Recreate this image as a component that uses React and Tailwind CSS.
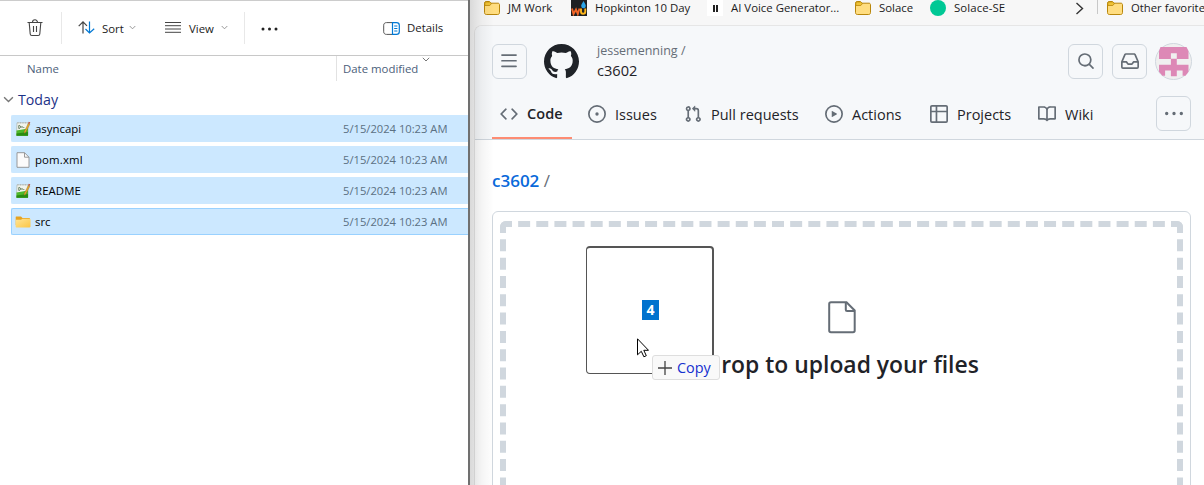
import React from "react";

const PATHS = {
  code: "m11.28 3.22 4.25 4.25a.75.75 0 0 1 0 1.06l-4.25 4.25a.749.749 0 0 1-1.275-.326.749.749 0 0 1 .215-.734L13.94 8l-3.72-3.72a.749.749 0 0 1 .326-1.275.749.749 0 0 1 .734.215Zm-6.56 0a.751.751 0 0 1 1.042.018.751.751 0 0 1 .018 1.042L2.06 8l3.72 3.72a.749.749 0 0 1-.326 1.275.749.749 0 0 1-.734-.215L.47 8.53a.75.75 0 0 1 0-1.06Z",
  issue: "M8 9.5a1.5 1.5 0 1 0 0-3 1.5 1.5 0 0 0 0 3ZM8 0a8 8 0 1 1 0 16A8 8 0 0 1 8 0ZM1.5 8a6.5 6.5 0 1 0 13 0 6.5 6.5 0 0 0-13 0Z",
  pull: "M1.5 3.25a2.25 2.25 0 1 1 3 2.122v5.256a2.251 2.251 0 1 1-1.5 0V5.372A2.25 2.25 0 0 1 1.5 3.25Zm5.677-.177L9.573.677A.25.25 0 0 1 10 .854V2.5h1A2.5 2.5 0 0 1 13.5 5v5.628a2.251 2.251 0 1 1-1.5 0V5a1 1 0 0 0-1-1h-1v1.646a.25.25 0 0 1-.427.177L7.177 3.427a.25.25 0 0 1 0-.354ZM3.75 2.5a.75.75 0 1 0 0 1.5.75.75 0 0 0 0-1.5Zm0 9.5a.75.75 0 1 0 0 1.5.75.75 0 0 0 0-1.5Zm8.25.75a.75.75 0 1 0 1.5 0 .75.75 0 0 0-1.5 0Z",
  play: "M8 0a8 8 0 1 1 0 16A8 8 0 0 1 8 0ZM1.5 8a6.5 6.5 0 1 0 13 0 6.5 6.5 0 0 0-13 0Zm4.879-2.773 4.264 2.559a.25.25 0 0 1 0 .428l-4.264 2.559A.25.25 0 0 1 6 10.559V5.442a.25.25 0 0 1 .379-.215Z",
  table: "M0 1.75C0 .784.784 0 1.75 0h12.5C15.216 0 16 .784 16 1.75v12.5A1.75 1.75 0 0 1 14.25 16H1.75A1.75 1.75 0 0 1 0 14.25ZM6.5 6.5v8h7.75a.25.25 0 0 0 .25-.25V6.5Zm8-1.5V1.75a.25.25 0 0 0-.25-.25H6.5V5Zm-13 1.5v7.75c0 .138.112.25.25.25H5v-8ZM5 5V1.5H1.75a.25.25 0 0 0-.25.25V5Z",
  book: "M0 1.75A.75.75 0 0 1 .75 1h4.253c1.227 0 2.317.59 3 1.501A3.743 3.743 0 0 1 11.006 1h4.245a.75.75 0 0 1 .75.75v10.5a.75.75 0 0 1-.75.75h-4.507a2.25 2.25 0 0 0-1.591.659l-.622.621a.75.75 0 0 1-1.06 0l-.622-.621A2.25 2.25 0 0 0 5.258 13H.75a.75.75 0 0 1-.75-.75Zm7.251 10.324.004-5.073-.002-2.253A2.25 2.25 0 0 0 5.003 2.5H1.5v9h3.757a3.75 3.75 0 0 1 1.994.574ZM8.755 4.75l-.004 7.322a3.752 3.752 0 0 1 1.992-.572H14.5v-9h-3.495a2.25 2.25 0 0 0-2.25 2.25Z",
  search: "M10.68 11.74a6 6 0 0 1-7.922-8.982 6 6 0 0 1 8.982 7.922l3.04 3.04a.749.749 0 0 1-.326 1.275.749.749 0 0 1-.734-.215ZM11.5 7a4.499 4.499 0 1 0-8.997 0A4.499 4.499 0 0 0 11.5 7Z",
  inbox: "M2.8 2.06A1.75 1.75 0 0 1 4.41 1h7.18c.7 0 1.333.417 1.61 1.06l2.74 6.395c.04.093.06.194.06.295v4.5A1.75 1.75 0 0 1 14.25 15H1.75A1.75 1.75 0 0 1 0 13.25v-4.5c0-.101.02-.202.06-.295Zm1.61.44a.25.25 0 0 0-.23.152L1.887 8H4.75a.75.75 0 0 1 .6.3L6.625 10h2.75l1.275-1.7a.75.75 0 0 1 .6-.3h2.863L11.82 2.652a.25.25 0 0 0-.23-.152Zm10.09 7h-2.875l-1.275 1.7a.75.75 0 0 1-.6.3h-3.5a.75.75 0 0 1-.6-.3L4.375 9.5H1.5v3.75c0 .138.112.25.25.25h12.5a.25.25 0 0 0 .25-.25Z",
  bars: "M1 2.75A.75.75 0 0 1 1.75 2h12.5a.75.75 0 0 1 0 1.5H1.75A.75.75 0 0 1 1 2.75Zm0 5A.75.75 0 0 1 1.75 7h12.5a.75.75 0 0 1 0 1.5H1.75A.75.75 0 0 1 1 7.75ZM1.75 12h12.5a.75.75 0 0 1 0 1.5H1.75a.75.75 0 0 1 0-1.5Z",
  dots: "M8 9a1.5 1.5 0 1 0 0-3 1.5 1.5 0 0 0 0 3ZM1.5 9a1.5 1.5 0 1 0 0-3 1.5 1.5 0 0 0 0 3Zm13 0a1.5 1.5 0 1 0 0-3 1.5 1.5 0 0 0 0 3Z",
  github: "M8 0c4.42 0 8 3.58 8 8a8.013 8.013 0 0 1-5.45 7.59c-.4.08-.55-.17-.55-.38 0-.27.01-1.13.01-2.2 0-.75-.25-1.23-.54-1.48 1.78-.2 3.65-.88 3.65-3.95 0-.88-.31-1.59-.82-2.15.08-.2.36-1.02-.08-2.12 0 0-.67-.22-2.2.82-.64-.18-1.32-.27-2-.27-.68 0-1.36.09-2 .27-1.53-1.03-2.2-.82-2.2-.82-.44 1.1-.16 1.92-.08 2.12-.51.56-.82 1.28-.82 2.15 0 3.06 1.86 3.75 3.64 3.95-.23.2-.44.55-.51 1.07-.46.21-1.61.55-2.33-.66-.15-.24-.6-.83-1.23-.82-.67.01-.27.38.01.53.34.19.73.9.82 1.13.16.45.68 1.31 2.69.94 0 .67.01 1.3.01 1.49 0 .21-.15.45-.55.38A7.995 7.995 0 0 1 0 8c0-4.42 3.58-8 8-8Z",
};

const Oct = ({ name, className = "size-[18px] text-[#656d76]" }) => (
  <svg viewBox="0 0 16 16" fill="currentColor" className={`shrink-0 ${className}`}>
    <path d={PATHS[name]} />
  </svg>
);

const Chevron = ({ className }) => (
  <svg viewBox="0 0 8 5" fill="none" stroke="currentColor" className={className}>
    <path d="M.8.8 4 4 7.2.8" />
  </svg>
);

const Folder = ({ className }) => (
  <svg viewBox="0 0 16 14" fill="none" className={`h-[14px] w-4 shrink-0 ${className}`}>
    <path d="M.5 2.2C.5 1.2 1.2.5 2.2.5h3L7 2.2h7c.9 0 1.5.6 1.5 1.5v8c0 1-.8 1.8-1.8 1.8H2.3C1.3 13.5.5 12.700.5 11.700Z" fill="#ffdd80" stroke="#b8860b" />
    <path d="M.8 4.500h5L7.500 2.500 5.500.900H2C1.300.900.800 1.400.800 2Z" fill="#efc234" stroke="#b8860b" strokeWidth=".8" />
  </svg>
);

const NotepadIcon = () => (
  <svg viewBox="0 0 16 16" className="size-4 shrink-0">
    <path d="M2 1.800h11v12.500H1.500Z" fill="#f1f4ee" stroke="#a3aba0" strokeWidth=".6" />
    <path d="M1.500 9.500 13 7.500v7.300H1.500Z" fill="#4db82a" />
    <path d="M1.500 12.500 13 11v3.800H1.500Z" fill="#2a8c12" />
    <path d="M3 1v1.500M5.500 1v1.500M8 1v1.500M10.500 1v1.500" stroke="#aaa" strokeWidth=".6" />
    <path d="M3.800 4.500v3M3.800 4.500c2.400-.5 2.400 3 0 3M7 5v2M8.800 6v1" fill="none" stroke="#56704e" strokeWidth=".9" />
    <path d="m9.300 10.500 4-8 1.500.8-4.100 7.900-1.600 1.100Z" fill="#efac2c" stroke="#87621f" strokeWidth=".4" />
    <path d="m13 2.300.8-1.500 1.500.8-.8 1.500Z" fill="#bd4b37" />
  </svg>
);

const PageIcon = () => (
  <svg viewBox="0 0 16 16" fill="none" stroke="#8f8f8f" strokeWidth=".9" className="size-4 shrink-0">
    <path d="M2 .7h7.500L14 5.200v10.100H2Z" fill="#fbfbfb" />
    <path d="M9.500.7v4.500H14" />
  </svg>
);

const YellowFolder = () => (
  <svg viewBox="0 0 16 16" className="size-4 shrink-0">
    <defs>
      <linearGradient id="folderFill" x1="0" y1="0" x2="1" y2="1">
        <stop stopColor="#ffe596" />
        <stop offset="1" stopColor="#fbc544" />
      </linearGradient>
    </defs>
    <path d="M1 2.500h5L7.500 4H14c.6 0 1 .4 1 1v6H.7V3Z" fill="#e6a321" />
    <path d="M.7 5.700H6l1.500-1H15c.3 0 .5.200.5.500v7.300c0 .5-.4.900-.9.900H1.500c-.5 0-.9-.4-.9-.9Z" fill="url(#folderFill)" />
  </svg>
);

const FILES = [
  { name: "asyncapi", icon: NotepadIcon, text: "" },
  { name: "pom.xml", icon: PageIcon, text: "tracking-[0.15px]" },
  { name: "README", icon: NotepadIcon, text: "tracking-[0.1px]" },
  { name: "src", icon: YellowFolder, text: "", focused: true },
];

function Explorer() {
  return (
    <section className="flex w-[468px] shrink-0 flex-col border-t border-[#ccc] bg-white text-[11.4px] text-[#1b1b1b]">
      <div className="flex h-[55px] items-center border-b border-[#c8c8c8]">
        <svg viewBox="0 0 16 18" fill="none" stroke="#454545" strokeWidth="1.1" className="ml-[27px] h-[18px] w-4">
          <path d="M.5 3.500h15M5.500 3.300a2.500 2.500 0 0 1 5 0M2.200 3.700l1 11.300c.1 1 .7 1.500 1.600 1.500h6.400c.9 0 1.500-.5 1.600-1.500l1-11.300M6.500 7v6M9.500 7v6" />
        </svg>
        <div className="ml-[18px] h-8 w-px bg-[#e8e8e8]" />
        <div className="ml-4 flex w-[87px] items-center">
          <svg viewBox="0 0 17 13" fill="none" strokeWidth="1.2" className="h-[13px] w-[17px]">
            <path d="M5 12.500V1M.7 5.200 5 .900l4 4" stroke="#454545" />
            <path d="M11.500.500V12M7.500 8l4 4 4.700-4.300" stroke="#0078d4" />
          </svg>
          <span className="mt-[1px] ml-[7px] w-[22px] whitespace-nowrap">Sort</span>
          <Chevron className="ml-[5px] h-[5px] w-[7px] text-[#8a8a8a]" />
        </div>
        <div className="flex w-[79px] items-center">
          <svg viewBox="0 0 16 11" stroke="#454545" className="h-[11px] w-4">
            <path d="M0 .500h16M0 3.700h16M0 7h16M0 10.300h16" />
          </svg>
          <span className="mt-[1px] ml-2 w-[27px] whitespace-nowrap">View</span>
          <Chevron className="ml-[5px] h-[5px] w-[7px] text-[#8a8a8a]" />
        </div>
        <div className="h-8 w-px bg-[#e8e8e8]" />
        <svg viewBox="0 0 18 4" fill="#222" className="mt-[1px] ml-4 h-1 w-[18px]">
          <circle cx="2" cy="2" r="1.500" /><circle cx="8.500" cy="2" r="1.500" /><circle cx="15" cy="2" r="1.500" />
        </svg>
        <svg viewBox="0 0 17 13" fill="none" className="ml-[104px] h-[13px] w-[17px]">
          <path d="M10 .6H3.500C1.800.6.7 1.600.7 3.200v6.600c0 1.600 1.100 2.600 2.800 2.600H10" stroke="#555" />
          <path d="M9.500.6h4c1.700 0 2.800 1 2.800 2.600v6.600c0 1.600-1.100 2.600-2.800 2.600h-4Z" stroke="#0078d4" strokeWidth="1.2" />
          <path d="M11.200 4h3.200M11.200 6.500h3.200M11.200 9h3.200" stroke="#0078d4" />
        </svg>
        <span className="ml-[7px]">Details</span>
      </div>

      <div className="flex h-[26px] items-start text-[#4c607a]">
        <span className="w-[336px] pl-[27px] leading-[26px]">Name</span>
        <div className="flex h-[25px] border-l border-[#e2e2e2] pl-[6px] leading-[26px]">
          <span className="w-[79px] whitespace-nowrap">Date modified</span>
          <Chevron className="mt-[1px] h-[5px] w-2 text-[#777]" />
        </div>
      </div>

      <div className="flex h-[33px] items-center pt-[2px] text-[#1c3287]">
        <Chevron className="ml-[3px] h-[7px] w-[11px] text-[#777]" />
        <span className="ml-1 text-[14.2px]">Today</span>
      </div>

      <div className="flex flex-col gap-1 pl-[11px] text-black">
        {FILES.map(({ name, icon: Icon, text, focused }) => (
          <div key={name} className={`flex h-[27px] items-center rounded-l-[2px] border border-r-0 bg-[#cce8ff] pl-[3px] ${focused ? "border-[#99d1ff]" : "border-[#cce8ff]"}`}>
            <Icon />
            <span className={`ml-1 w-[308px] ${text}`}>{name}</span>
            <span className="pt-[1px] text-[11.2px] whitespace-nowrap text-[#5b7083]">5/15/2024 10:23 AM</span>
          </div>
        ))}
      </div>
    </section>
  );
}

function Bookmarks() {
  return (
    <div className="flex h-[25px] items-start pl-[14px] text-[11.4px] leading-4 whitespace-nowrap text-[#1b1b1b] [&>*]:shrink-0">
      <Folder className="mt-[1px]" />
      <span className="ml-2 w-[63px]">JM Work</span>
      <svg viewBox="0 0 16 16" className="size-4">
        <rect width="16" height="16" fill="#1e2023" />
        <path d="M12.500 1c1.500 2.500 2.300 3.800 2.300 5a2.300 2.300 0 0 1-4.600 0c0-1.200.8-2.500 2.300-5Z" fill="#2ba5e8" />
        <path d="m1 8.500 1.500 5.500L5 9.500 6.800 14l1.700-5.500" fill="none" stroke="#f26527" strokeWidth="1.900" />
        <path d="M10 8.500v3c0 3 4.300 3 4.300 0v-3" fill="none" stroke="#ffb71b" strokeWidth="1.900" />
      </svg>
      <span className="ml-2 w-[112px]">Hopkinton 10 Day</span>
      <div className="flex size-4 items-center justify-center gap-[1px] bg-white">
        <i className="h-[7px] w-[2px] bg-[#222]" /><i className="h-[7px] w-[2px] bg-[#222]" />
      </div>
      <span className="ml-2 w-[124px]">AI Voice Generator...</span>
      <Folder className="mt-[1px]" />
      <span className="ml-2 w-[51px]">Solace</span>
      <div className="size-4 rounded-full bg-[#00c895]" />
      <span className="ml-2 w-[121px] tracking-[0.1px]">Solace-SE</span>
      <svg viewBox="0 0 9 13" fill="none" stroke="#333" strokeWidth="1.400" className="mt-[2px] h-[13px] w-[9px]">
        <path d="m1.500 1 6 5.500-6 5.500" />
      </svg>
      <div className="ml-[13px] h-[14px] w-px bg-[#c8c8c8]" />
      <Folder className="mt-[1px] ml-[9px]" />
      <span className="ml-2 text-[11.300px]">Other favorite</span>
    </div>
  );
}

const IconButton = ({ name, className = "" }) => (
  <div className={`flex size-[35px] shrink-0 items-center justify-center rounded-md border border-[#d0d7de] ${className}`}>
    <Oct name={name} />
  </div>
);

const TABS = [
  { label: "Code", icon: "code", box: "w-[88px]", text: "font-semibold pt-0 tracking-[0.1px]" },
  { label: "Issues", icon: "issue", box: "w-24", text: "pt-[2px]" },
  { label: "Pull requests", icon: "pull", box: "w-[141px]", text: "pt-[2px]" },
  { label: "Actions", icon: "play", box: "w-[105px]", text: "pt-[2px]" },
  { label: "Projects", icon: "table", box: "w-[108px]", text: "pt-[2px]" },
  { label: "Wiki", icon: "book", box: "w-[126px]", text: "pt-[2px]" },
];

function RepoHeader() {
  return (
    <header className="flex h-[114px] flex-col border-b border-[#d0d7de] bg-[#f6f8fa] pl-[17px]">
      <div className="flex pt-[17px]">
        <IconButton name="bars" className="mt-[1px] pr-[2px] pb-[1px]" />
        <Oct name="github" className="mt-[1px] ml-[17px] size-[35px] text-[#1f2328]" />
        <div className="ml-[18px] w-[471px] text-[#1f2328]">
          <div className="-mt-[1px] text-[12.500px] leading-[18px] font-medium text-[#656d76]">jessemenning /</div>
          <div className="text-[14.6px] leading-[20px] font-medium">c3602</div>
        </div>
        <IconButton name="search" className="mt-[1px] pb-[1px]" />
        <IconButton name="inbox" className="mt-[1px] ml-[9px] pb-[1px]" />
        <svg viewBox="0 0 37 37" className="ml-2 size-[37px] shrink-0">
          <circle cx="18.500" cy="18.500" r="18" fill="#f0f0f0" stroke="#d0d7de" />
          <path fill="#dd88b6" d="M5.500 4h26l2 4v8h-11.700v-5.800h-5.900V16H4V8Zm10.400 11.800h5.900v5.900h11.700v7l-3 4h-2.900v-5.200h-5.800v5.700h-5.900v-5.700h-5.800v5.200H7.400l-3.400-4v-7h11.900Z" />
        </svg>
      </div>
      <nav className="flex flex-1 items-end text-[14.5px] text-[#1f2328]">
        {TABS.map(({ label, icon, box, text }, i) => (
          <div key={label} className={`h-[50px] shrink-0 ${box} ${i === 0 ? "" : "pl-2"}`}>
            <div className={`flex h-full items-center ${i === 0 ? "w-20 border-b-2 border-[#fd8c73] pt-[2px] pl-2" : ""}`}>
              <Oct name={icon} />
              <span className={`ml-[9px] whitespace-nowrap ${text}`}>{label}</span>
            </div>
          </div>
        ))}
        <IconButton name="dots" className="mb-2" />
      </nav>
    </header>
  );
}

function DropZone() {
  return (
    <div className="mt-[19px] ml-[17px] h-[400px] w-[699px] rounded-md border border-[#d0d7de] p-[7px] pt-[9px]">
      <div className="flex h-[360px] flex-col items-center rounded-[6px] border-6 border-dashed border-[#d0d7de] pt-[74px]">
        <svg viewBox="0 0 28 33" fill="none" stroke="#656d76" strokeWidth="2" className="h-[33px] w-7">
          <path d="M3 1.200h15.500L26.700 9.500v20c0 1.200-.5 1.800-1.700 1.800H3c-1.200 0-1.800-.6-1.800-1.800V3c0-1.200.6-1.800 1.800-1.800Z" />
          <path d="M17.800 1.500v7.200c0 .8.5 1.300 1.300 1.300h7.300" />
        </svg>
        <h2 className="mt-[13px] pl-[17px] text-[22.900px] leading-9 font-semibold text-[#1f2328]">rop to upload your files</h2>
      </div>
    </div>
  );
}

function DragPreview() {
  return (
    <>
      <div className="absolute top-[246px] left-[586px] flex h-32 w-32 items-center justify-center rounded-[4px] border-t-2 border-r-2 border-b border-l border-[#555] bg-white">
        <span className="mb-[2px] ml-[2px] flex h-5 w-[17px] items-center justify-center bg-[#0072ce] text-[14px] font-bold text-white">4</span>
      </div>
      <svg viewBox="0 0 12 20" className="absolute top-[338px] left-[637px] h-5 w-3">
        <path d="M.5.800v16l3.800-3.500 2.600 5.500 2.400-1.100-2.500-5.400h4.700Z" fill="white" stroke="black" />
      </svg>
      <div className="absolute top-[355px] left-[652px] flex h-[25px] w-[68px] items-center rounded-[3px] border border-[#dedede] bg-[#f9f9f9] pl-[5px] text-[14.400px] text-[#1530cf]">
        <svg viewBox="0 0 14 14" stroke="#444" strokeWidth="1.300" className="size-[14px]"><path d="M7 0v14M0 7h14" /></svg>
        <span className="ml-[5px]">Copy</span>
      </div>
    </>
  );
}

export default function App() {
  return (
    <main className="relative flex h-[485px] w-[1204px] overflow-hidden bg-white font-['Open_Sans','Noto_Sans',sans-serif]">
      <Explorer />
      <section className="relative flex min-w-0 flex-1 flex-col overflow-hidden border-l-2 border-[#707070] bg-[#f7f7f7]">
        <Bookmarks />
        <div className="ml-1 h-[460px] shrink-0 overflow-hidden rounded-tl-lg border-t border-l border-[#e6e6e6] bg-white">
          <RepoHeader />
          <div className="mt-[30px] ml-[17px] h-[22px] text-[17px] leading-[22px] text-[#656d76]">
            <span className="font-semibold text-[#0969da]">c3602</span> /
          </div>
          <DropZone />
        </div>
        <div className="pointer-events-none absolute inset-y-0 left-0 w-6 bg-linear-to-r from-black/12 via-black/4 to-transparent" />
      </section>
      <DragPreview />
    </main>
  );
}
